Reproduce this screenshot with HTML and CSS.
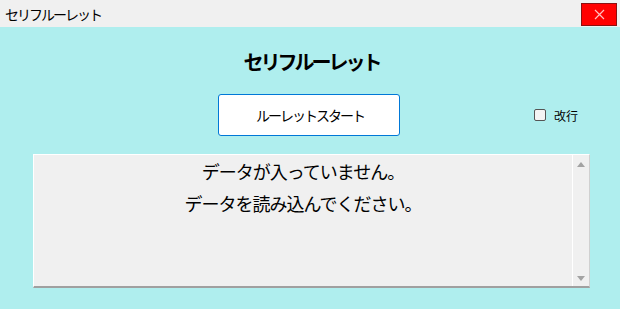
FILE: index.html
```html
<!DOCTYPE html>
<html lang="ja">
<head>
    <meta charset="UTF-8">
    <title>セリフルーレット</title>
    <link rel="stylesheet" href="styles.css">
</head>
<body>
    <div class="window">
        <!-- title bar -->
        <div class="titlebar">
            <span class="title">セリフルーレット</span>
            <button class="close">
                <svg width="11" height="11" viewBox="0 0 11 11">
                    <path d="M1 1 L10 10 M10 1 L1 10" stroke="#ffc0c0" stroke-width="1.2"/>
                </svg>
            </button>
        </div>

        <div class="content">
            <h1 class="heading">セリフルーレット</h1>

            <div class="controls">
                <div></div>
                <button class="start">ルーレットスタート</button>
                <label class="wrap">
                    <span class="check"></span>
                    <span>改行</span>
                </label>
            </div>

            <div class="output">
                <div class="text">データが入っていません。<br>データを読み込んでください。</div>
                <div class="scrollbar">
                    <span class="arrow up"></span>
                    <span class="arrow down"></span>
                </div>
            </div>
        </div>
    </div>
</body>
</html>
```

FILE: styles.css
```css
* {
    box-sizing: border-box;
}
body {
    margin: 0;
    font-family: "Noto Sans CJK JP", "Noto Sans", sans-serif;
    color: #000;
}
.window {
    width: 620px;
    height: 309px;
    display: flex;
    flex-direction: column;
}
.titlebar {
    height: 27px;
    background-color: #f0f0f0;
    display: flex;
    align-items: center;
    justify-content: space-between;
    padding: 0 3px 0 5px;
}
.title {
    font-size: 14px;
    letter-spacing: -2px;
}
.close {
    width: 36px;
    height: 23px;
    margin-top: 1px;
    background-color: #ff0000;
    border: 1px solid #8a1010;
    padding: 0;
    display: flex;
    align-items: center;
    justify-content: center;
}
.content {
    flex: 1;
    background-color: #afeeee;
    padding-top: 20px;
}
.heading {
    margin: 0;
    font-size: 20px;
    font-weight: bold;
    text-align: center;
    line-height: 30px;
    letter-spacing: -3px;
    padding-left: 3px;
}
.controls {
    display: grid;
    grid-template-columns: 218px 182px 1fr;
    align-items: center;
    margin-top: 17px;
}
.start {
    height: 42px;
    background-color: #fff;
    border: 1px solid #0078d7;
    border-radius: 3px;
    font-family: inherit;
    font-size: 14px;
    letter-spacing: -2px;
    padding: 0 0 0 2px;
}
.wrap {
    justify-self: end;
    margin-right: 42px;
    display: flex;
    align-items: center;
    gap: 8px;
    font-size: 12px;
}
.check {
    width: 12px;
    height: 12px;
    border: 1px solid #555;
    border-radius: 2px;
    background-color: #f4f4f4;
}
.output {
    margin: 18px 0 0 33px;
    width: 557px;
    height: 134px;
    background-color: #f0f0f0;
    border-top: 1px solid #fff;
    border-left: 1px solid #fff;
    border-right: 1px solid #d0d0d0;
    border-bottom: 2px solid #a0a0a0;
    display: flex;
}
.text {
    flex: 1;
    text-align: center;
    font-size: 18px;
    line-height: 32px;
    letter-spacing: -1px;
    padding-top: 0;
}
.scrollbar {
    width: 17px;
    border-left: 1px solid #fff;
    display: flex;
    flex-direction: column;
    justify-content: space-between;
    align-items: center;
    padding: 7px 0 5px;
}
.arrow {
    width: 0;
    height: 0;
    border-left: 4px solid transparent;
    border-right: 4px solid transparent;
}
.arrow.up {
    border-bottom: 5px solid #a3a3a3;
}
.arrow.down {
    border-top: 5px solid #a3a3a3;
}
```
